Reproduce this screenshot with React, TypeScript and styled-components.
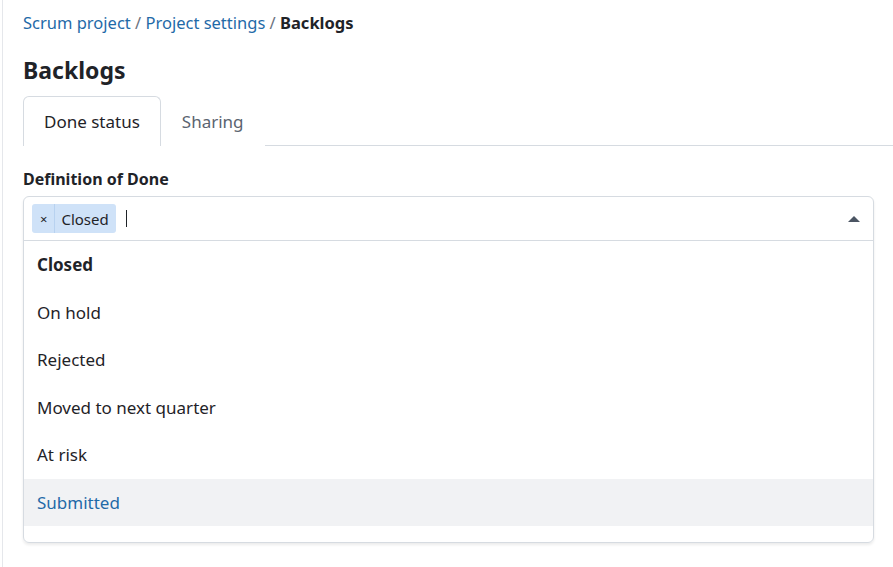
import styled, { createGlobalStyle } from 'styled-components';

const Global = createGlobalStyle`
  body { margin: 0; background: #fff; font-family: "Noto Sans", "Open Sans", sans-serif; color: #1f2328; }
`;

const Page = styled.div`
  margin-left: 2px;
  border-left: 1px solid #e5e7eb;
  min-height: 567px;
  padding: 10px 0 0 20px;
  box-sizing: border-box;
`;

const Crumbs = styled.div`
  font-size: 16.5px;
  line-height: 26px;
  color: #6b7280;
  a { color: #1f6aa8; text-decoration: none; }
  b { color: #1f2328; font-weight: 700; }
`;

const Title = styled.h1`
  font-size: 23px;
  font-weight: 700;
  margin: 20px 0 12px;
  line-height: 28px;
`;

const Tabs = styled.div`
  display: flex;
  border-bottom: 1px solid #d6dbe1;
  height: 49px;
`;

const Tab = styled.div<{ $active?: boolean }>`
  padding: 0 20px;
  display: flex;
  align-items: center;
  font-size: 17px;
  color: ${p => (p.$active ? '#1f2328' : '#5b6470')};
  border: 1px solid ${p => (p.$active ? '#d6dbe1' : 'transparent')};
  border-bottom: none;
  border-radius: 6px 6px 0 0;
  background: #fff;
  margin-bottom: -1px;
`;

const Label = styled.div`
  font-weight: 700;
  font-size: 16px;
  margin: 22px 0 6px;
`;

const Select = styled.div`
  width: 849px;
  border: 1px solid #d6dbe1;
  border-radius: 6px;
  box-shadow: 0 2px 3px rgba(0, 0, 0, 0.08);
`;

const Control = styled.div`
  height: 43px;
  display: flex;
  align-items: center;
  padding: 0 8px;
  border-bottom: 1px solid #d6dbe1;
  gap: 10px;
`;

const Tag = styled.div`
  display: flex;
  height: 29px;
  background: #cfe2f8;
  border-radius: 3px;
  font-size: 15px;
  align-items: center;
  span:first-child { padding: 0 7px 0 8px; border-right: 1px solid #b8d2f0; height: 100%; display: flex; align-items: center; font-size: 13px; }
  span:last-child { padding: 0 7px 0 6px; }
`;

const Caret = styled.div`
  width: 1px;
  height: 17px;
  background: #1f2328;
  flex: 1;
  max-width: 1px;
`;

const Arrow = styled.div`
  margin-left: auto;
  margin-right: 5px;
  border-left: 6px solid transparent;
  border-right: 6px solid transparent;
  border-bottom: 6px solid #4b5563;
`;

const Menu = styled.div`
  padding-bottom: 16px;
`;

const Item = styled.div<{ $hl?: boolean; $bold?: boolean }>`
  height: 47.5px;
  display: flex;
  align-items: center;
  padding: 0 13px;
  font-size: 17px;
  font-weight: ${p => (p.$bold ? 700 : 400)};
  background: ${p => (p.$hl ? '#f1f2f4' : 'transparent')};
  color: ${p => (p.$hl ? '#1f6aa8' : '#1f2328')};
`;

const options = ['Closed', 'On hold', 'Rejected', 'Moved to next quarter', 'At risk', 'Submitted'];

export default function App() {
  return (
    <Page>
      <Global />
      <Crumbs>
        <a>Scrum project</a> / <a>Project settings</a> / <b>Backlogs</b>
      </Crumbs>
      <Title>Backlogs</Title>
      <Tabs>
        <Tab $active>Done status</Tab>
        <Tab>Sharing</Tab>
      </Tabs>
      <Label>Definition of Done</Label>
      <Select>
        <Control>
          <Tag><span>×</span><span>Closed</span></Tag>
          <Caret />
          <Arrow />
        </Control>
        <Menu>
          {options.map((o, i) => (
            <Item key={o} $bold={i === 0} $hl={o === 'Submitted'}>{o}</Item>
          ))}
        </Menu>
      </Select>
    </Page>
  );
}
